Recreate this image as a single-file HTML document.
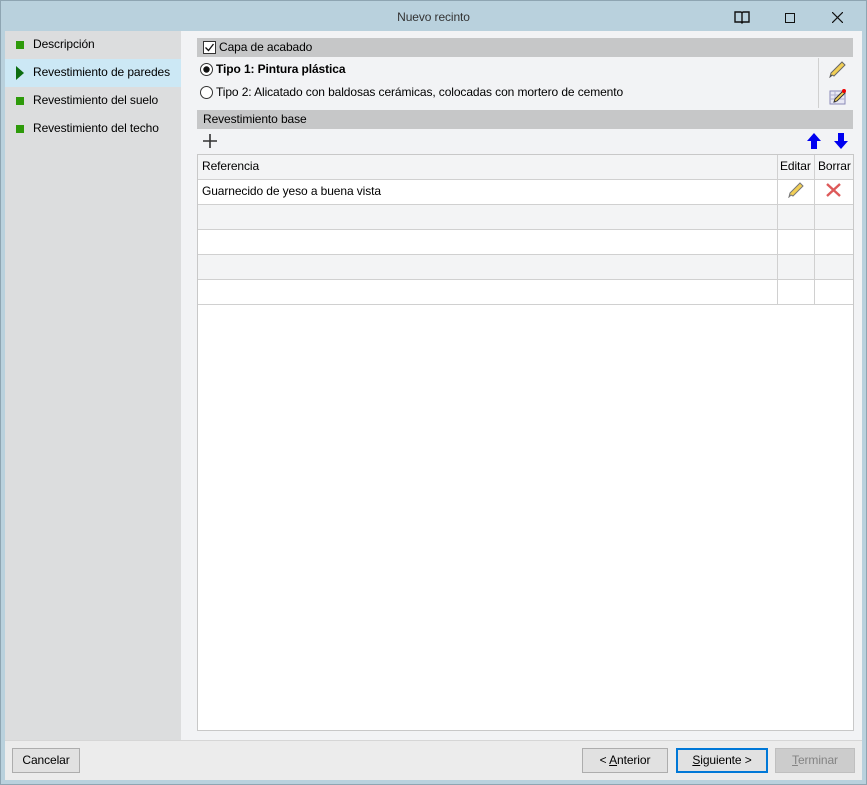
<!DOCTYPE html>
<html><head><meta charset="utf-8"><style>
*{box-sizing:border-box;margin:0;padding:0}
body{width:867px;height:785px;position:relative;overflow:hidden;font-family:"Liberation Sans",sans-serif;font-size:12px;letter-spacing:-0.1px;color:#000;background:#b9d1dd}
.a{position:absolute}
.frame{left:0;top:0;width:867px;height:785px;border:1px solid #8ea5b2;background:#b9d1dd}
.side{left:5px;top:31px;width:176px;height:709px;background:#dcddde}
.main{left:181px;top:31px;width:681px;height:709px;background:#f2f3f5}
.bot{left:5px;top:740px;width:857px;height:40px;background:#ececec;border-top:1px solid #d6d6d6}
.it{left:5px;width:176px;height:28px;line-height:27px;padding-left:28px;font-size:12px}
.sq{position:absolute;left:11px;top:10px;width:8px;height:8px;background:#2e9a0a}
.hdr{left:197px;width:656px;height:19px;background:#c6c7c8;line-height:19px;padding-left:6px}
.btn{height:25px;border:1px solid #adadad;background:#e1e1e1;text-align:center;line-height:23px;font-size:12px;top:748px}
.row{left:198px;width:655px;height:25px;border-bottom:1px solid #d0d0d0;line-height:23px;padding-left:4px}
.vl{width:1px;background:#d0d0d0}
</style></head><body>
<div class="a frame"></div>
<div class="a" style="left:0;top:10px;width:867px;text-align:center;color:#333">Nuevo recinto</div>
<svg class="a" style="left:734px;top:11px" width="16" height="14"><path d="M1 1h6l1 1 1-1h6v10H9l-1 1-1-1H1z M8 2v9" fill="none" stroke="#111" stroke-width="1.4"/></svg>
<div class="a" style="left:785px;top:13px;width:10px;height:10px;border:1px solid #111"></div>
<svg class="a" style="left:832px;top:12px" width="11" height="11"><path d="M0 0L11 11M11 0L0 11" stroke="#111" stroke-width="1.2"/></svg>
<div class="a side"></div>
<div class="a main"></div>
<div class="a it" style="top:31px"><span class="sq"></span>Descripción</div>
<div class="a it" style="top:59px;background:#cce8f5"><svg style="position:absolute;left:11px;top:7px" width="8" height="14"><path d="M0 0L8 7L0 14z" fill="#0d6d10"/></svg>Revestimiento de paredes</div>
<div class="a it" style="top:87px"><span class="sq"></span>Revestimiento del suelo</div>
<div class="a it" style="top:115px"><span class="sq"></span>Revestimiento del techo</div>

<div class="a hdr" style="top:38px;padding-left:22px">Capa de acabado</div>
<svg class="a" style="left:203px;top:41px" width="13" height="13"><rect x="0.5" y="0.5" width="12" height="12" fill="#fff" stroke="#333"/><path d="M2.5 6.5l3 3 5-6.5" fill="none" stroke="#111" stroke-width="1.3"/></svg>
<svg class="a" style="left:200px;top:63px" width="13" height="13"><circle cx="6.5" cy="6.5" r="6" fill="#fff" stroke="#333"/><circle cx="6.5" cy="6.5" r="3.2" fill="#111"/></svg>
<div class="a" style="left:216px;top:62px;font-weight:bold">Tipo 1: Pintura plástica</div>
<svg class="a" style="left:200px;top:86px" width="13" height="13"><circle cx="6.5" cy="6.5" r="6" fill="#fff" stroke="#333"/></svg>
<div class="a" style="left:216px;top:85px">Tipo 2: Alicatado con baldosas cerámicas, colocadas con mortero de cemento</div>
<div class="a vl" style="left:818px;top:58px;height:50px"></div>
<svg class="a" style="left:829px;top:61px" width="17" height="17"><path d="M3 14L1 16 2 12 13 1 16 4 5 15z" fill="#f2cf55" stroke="#666"/><path d="M1 16l2-1-1-1z" fill="#333"/></svg>
<svg class="a" style="left:829px;top:88px" width="18" height="17"><rect x="1" y="3" width="15" height="13" fill="#e8e8f4" stroke="#8a8ab8"/><path d="M1 7h15M1 11h15M6 3v13" stroke="#b0b0d0"/><path d="M5 14l1-3 8-8 2 2-8 8z" fill="#f2cf55" stroke="#333"/><circle cx="15" cy="3" r="2" fill="#e00"/></svg>

<div class="a hdr" style="top:110px">Revestimiento base</div>
<svg class="a" style="left:203px;top:134px" width="14" height="14"><path d="M7 0v14M0 7h14" stroke="#333" stroke-width="1.6"/></svg>
<svg class="a" style="left:807px;top:133px" width="14" height="16"><path d="M7 0L14 8H10V16H4V8H0z" fill="#0000f0"/></svg>
<svg class="a" style="left:834px;top:133px" width="14" height="16"><path d="M7 16L14 8H10V0H4V8H0z" fill="#0000f0"/></svg>

<div class="a" style="left:197px;top:154px;width:657px;height:577px;background:#fff;border:1px solid #c8c8c8"></div>
<div class="a row" style="top:155px;background:#f3f4f5">Referencia</div>
<div class="a" style="left:780px;top:159px">Editar</div>
<div class="a" style="left:818px;top:159px">Borrar</div>
<div class="a row" style="top:180px;background:#fff">Guarnecido de yeso a buena vista</div>
<div class="a row" style="top:205px;background:#f3f4f5"></div>
<div class="a row" style="top:230px;background:#fff"></div>
<div class="a row" style="top:255px;background:#f3f4f5"></div>
<div class="a row" style="top:280px;background:#fff"></div>
<div class="a vl" style="left:777px;top:155px;height:149px"></div>
<div class="a vl" style="left:814px;top:155px;height:149px"></div>
<svg class="a" style="left:788px;top:182px" width="16" height="16"><path d="M3 13L1 15 2 11 12 1 15 4 5 14z" fill="#f2cf55" stroke="#777"/></svg>
<svg class="a" style="left:826px;top:183px" width="15" height="14"><path d="M1 1L14 13M14 1L1 13" stroke="#dd5a5a" stroke-width="2.4"/></svg>

<div class="a bot"></div>
<div class="a btn" style="left:12px;width:68px">Cancelar</div>
<div class="a btn" style="left:582px;width:86px">&lt; <u>A</u>nterior</div>
<div class="a btn" style="left:676px;width:92px;border:2px solid #0078d7;line-height:21px"><u>S</u>iguiente &gt;</div>
<div class="a btn" style="left:775px;width:80px;border-color:#bfbfbf;background:#cccccc;color:#838383"><u>T</u>erminar</div>
</body></html>
